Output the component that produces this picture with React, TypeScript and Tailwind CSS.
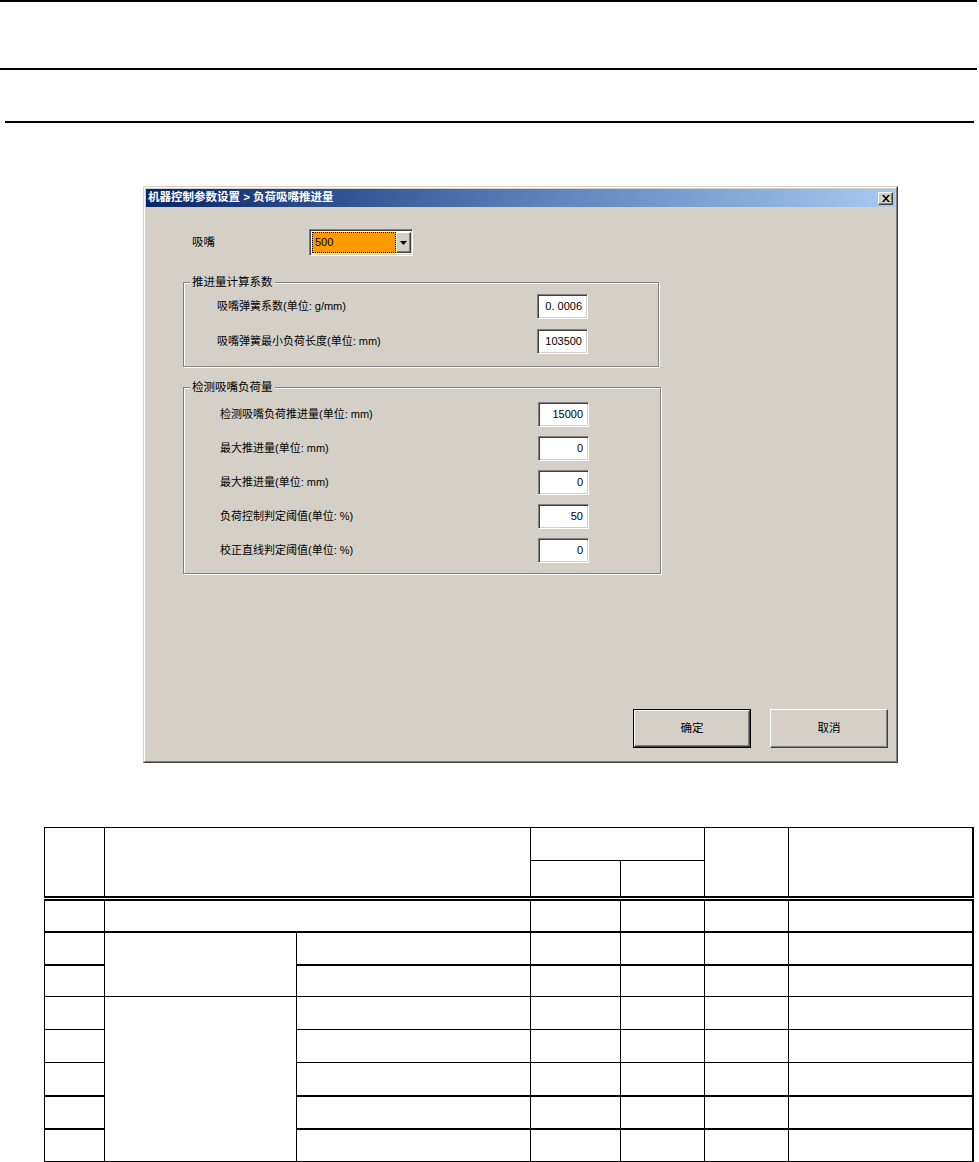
import React from "react";

const FONT = "font-['Liberation_Sans','Noto_Sans_CJK_SC',sans-serif]";
const RAISED =
  "border border-t-white border-l-white border-r-[#404040] border-b-[#404040] shadow-[inset_-1px_-1px_0_#808080,inset_1px_1px_0_#d4d0c8]";
const SUNKEN =
  "border border-t-[#808080] border-l-[#808080] border-r-white border-b-white shadow-[inset_1px_1px_0_#404040,inset_-1px_-1px_0_#d4d0c8]";

function Field({ v }: { v: string }) {
  return (
    <div className={`w-[51px] h-[25px] bg-white flex items-center justify-end pr-[5px] text-[11px] text-black ${SUNKEN}`}>
      {v}
    </div>
  );
}

function Row({ label, v, labelW }: { label: string; v: string; labelW: string }) {
  return (
    <div className="flex items-center h-[25px]">
      <div className={`${labelW} text-[11px] text-black whitespace-nowrap`}>{label}</div>
      <Field v={v} />
    </div>
  );
}

function Legend({ text }: { text: string }) {
  return (
    <div className="absolute left-[6px] top-[-9px] px-[2px] bg-[#d4d0c8] text-[11.5px] leading-[16px] text-black">
      {text}
    </div>
  );
}

function Dialog() {
  return (
    <div className={`ml-[143px] w-[755px] h-[577px] bg-[#d4d0c8] border border-t-[#d4d0c8] border-l-[#d4d0c8] border-r-[#404040] border-b-[#404040] ${FONT}`}>
      <div className="h-full border border-t-white border-l-white border-r-[#808080] border-b-[#808080] p-px flex flex-col">
        {/* title bar */}
        <div className="h-[18px] bg-linear-to-r from-[#0a246a] via-[#5a7db5] to-[#a6caf0] flex items-center justify-between pl-[2px] pr-[2px]">
          <span className="text-white font-bold text-[11.5px] leading-none whitespace-nowrap">
            机器控制参数设置 &gt; 负荷吸嘴推进量
          </span>
          <div className={`w-[15px] h-[13px] bg-[#d4d0c8] flex items-center justify-center ${RAISED}`}>
            <svg width="8" height="7" viewBox="0 0 8 7">
              <path d="M0 0h2l2 2.5L6 0h2L5 3.5 8 7H6L4 4.5 2 7H0l3-3.5z" fill="#000" />
            </svg>
          </div>
        </div>
        {/* body */}
        <div className="flex-1 flex flex-col">
          <div className="flex items-center h-[27px] mt-[22px] pl-[46px]">
            <div className="w-[117px] text-[11.5px] text-black">吸嘴</div>
            <div className={`w-[104px] h-[27px] flex p-[1px] bg-white ${SUNKEN}`}>
              <div className="flex-1 bg-[#ff9900] ml-px mt-px mb-px flex">
                <div className="flex-1 border border-dotted border-black flex items-center pl-[2px] text-[11px] text-black">500</div>
              </div>
              <div className={`w-[15px] bg-[#d4d0c8] flex items-center justify-center mt-px mb-px ${RAISED}`}>
                <svg width="7" height="4" viewBox="0 0 7 4">
                  <path d="M0 0h7L3.5 4z" fill="#000" />
                </svg>
              </div>
            </div>
          </div>

          <div className="relative mt-[26px] ml-[37px] w-[476px] h-[85px] border border-[#808080] shadow-[inset_1px_1px_0_#fff,1px_1px_0_#fff] pt-[11px] pl-[33px] flex flex-col gap-[10px]">
            <Legend text="推进量计算系数" />
            <Row label="吸嘴弹簧系数(单位: g/mm)" v="0. 0006" labelW="w-[320px]" />
            <Row label="吸嘴弹簧最小负荷长度(单位: mm)" v="103500" labelW="w-[320px]" />
          </div>

          <div className="relative mt-[20px] ml-[37px] w-[478px] h-[187px] border border-[#808080] shadow-[inset_1px_1px_0_#fff,1px_1px_0_#fff] pt-[14px] pl-[36px] flex flex-col gap-[9px]">
            <Legend text="检测吸嘴负荷量" />
            <Row label="检测吸嘴负荷推进量(单位: mm)" v="15000" labelW="w-[318px]" />
            <Row label="最大推进量(单位: mm)" v="0" labelW="w-[318px]" />
            <Row label="最大推进量(单位: mm)" v="0" labelW="w-[318px]" />
            <Row label="负荷控制判定阈值(单位: %)" v="50" labelW="w-[318px]" />
            <Row label="校正直线判定阈值(单位: %)" v="0" labelW="w-[318px]" />
          </div>

          <div className="flex mt-[135px] pl-[487px] gap-[19px]">
            <div className="w-[118px] h-[39px] border border-black">
              <div className={`w-full h-full bg-[#d4d0c8] flex items-center justify-center text-[11.5px] text-black ${RAISED}`}>确定</div>
            </div>
            <div className={`w-[118px] h-[39px] bg-[#d4d0c8] flex items-center justify-center text-[11.5px] text-black ${RAISED}`}>取消</div>
          </div>
        </div>
      </div>
    </div>
  );
}

const C = "border border-black p-0";
const DB = "border-b-[5px] border-double";
const TH = "border-b-2";
const R = "border-r-2";

function BodyRow({ merged, thick, h }: { merged?: React.ReactNode; thick?: boolean; h: string }) {
  const b = thick ? TH : "";
  return (
    <tr className={h}>
      <td className={`${C} ${b}`} />
      {merged}
      <td className={`${C} ${b}`} />
      <td className={`${C} ${b}`} />
      <td className={`${C} ${b}`} />
      <td className={`${C} ${b}`} />
      <td className={`${C} ${b} ${R}`} />
    </tr>
  );
}

function Table() {
  return (
    <table className="ml-[44px] mt-[64px] border-collapse table-fixed w-[928px]">
      <colgroup>
        <col className="w-[60px]" />
        <col className="w-[192px]" />
        <col className="w-[234px]" />
        <col className="w-[90px]" />
        <col className="w-[84px]" />
        <col className="w-[84px]" />
        <col className="w-[184px]" />
      </colgroup>
      <tbody>
        <tr className="h-[33px]">
          <td rowSpan={2} className={`${C} ${DB}`} />
          <td rowSpan={2} colSpan={2} className={`${C} ${DB}`} />
          <td colSpan={2} className={C} />
          <td rowSpan={2} className={`${C} ${DB}`} />
          <td rowSpan={2} className={`${C} ${DB} ${R}`} />
        </tr>
        <tr className="h-[38px]">
          <td className={`${C} ${DB}`} />
          <td className={`${C} ${DB}`} />
        </tr>
        <tr className="h-[33px]">
          <td className={`${C} ${TH}`} />
          <td colSpan={2} className={`${C} ${TH}`} />
          <td className={`${C} ${TH}`} />
          <td className={`${C} ${TH}`} />
          <td className={`${C} ${TH}`} />
          <td className={`${C} ${TH} ${R}`} />
        </tr>
        <BodyRow h="h-[33px]" thick merged={<td rowSpan={2} className={C} />} />
        <BodyRow h="h-[32px]" />
        <BodyRow h="h-[33px]" merged={<td rowSpan={5} className={C} />} />
        <BodyRow h="h-[33px]" />
        <BodyRow h="h-[33px]" thick />
        <BodyRow h="h-[33px]" thick />
        <BodyRow h="h-[33px]" />
      </tbody>
    </table>
  );
}

export default function App() {
  return (
    <div className="w-[979px] h-[1162px] bg-white overflow-hidden">
      <div className="h-[2px] w-[977px] bg-black" />
      <div className="mt-[66px] h-[2px] w-[977px] bg-black" />
      <div className="mt-[51px] ml-[5px] h-[2px] w-[969px] bg-black" />
      <div className="mt-[63px]">
        <Dialog />
      </div>
      <Table />
    </div>
  );
}
